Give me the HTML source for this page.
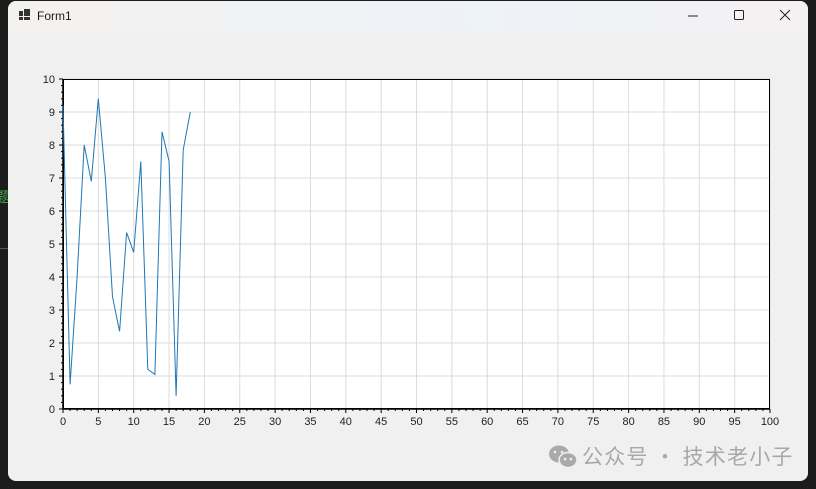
<!DOCTYPE html>
<html><head><meta charset="utf-8"><style>
html,body{margin:0;padding:0;width:816px;height:489px;overflow:hidden;background:#1c1c1c;font-family:"Liberation Sans","Noto Sans CJK SC",sans-serif}
.win{position:absolute;left:8px;top:1px;width:800px;height:480px;background:#f0f0f0;border-radius:8px;overflow:hidden}
.tb{position:absolute;left:0;top:0;width:800px;height:30px;background:linear-gradient(90deg,#f4f2ef,#eef2f9 60%,#f4f1f1)}
.side{position:absolute;left:0;width:8px;height:1px;background:#555;top:248px}
.g{position:absolute;left:-4px;top:187px;color:#4caf50;font-size:14px;font-family:"Noto Sans CJK SC",sans-serif}
</style></head><body>
<div class="side"></div><div class="g">题</div>
<div class="win">
<div class="tb">
<svg width="800" height="30" style="position:absolute;left:0;top:0">
<rect x="11" y="10" width="4" height="5" fill="#333"/><rect x="16" y="8" width="6" height="7" fill="#333"/><rect x="11" y="16" width="4" height="3" fill="#333"/><rect x="16" y="16" width="6" height="3" fill="#333"/>
<text x="29" y="19" font-size="12" fill="#1a1a1a" font-family="Liberation Sans">Form1</text>
<line x1="680" y1="15" x2="690" y2="15" stroke="#222" stroke-width="1"/>
<rect x="726.5" y="9.5" width="9" height="9" rx="1" fill="none" stroke="#222"/>
<path d="M772 9L782 19M782 9L772 19" stroke="#222" stroke-width="1"/>
</svg>
</div>
</div>
<svg id="c" width="816" height="489" style="position:absolute;left:0;top:0" font-family="Liberation Sans" font-size="11" fill="#222"></svg>
<div style="position:absolute;left:548px;top:441px;color:#a8a8a8;font-size:21px;letter-spacing:1.2px;font-family:'Noto Sans CJK SC',sans-serif;white-space:nowrap">
<svg width="30" height="24" style="vertical-align:-4px;margin-right:4px"><ellipse cx="11" cy="10" rx="10" ry="8.5" fill="#aaa"/><ellipse cx="20" cy="16" rx="9" ry="7.5" fill="#aaa" stroke="#f0f0f0" stroke-width="1.5"/><circle cx="17" cy="15" r="1.3" fill="#f0f0f0"/><circle cx="23" cy="15" r="1.3" fill="#f0f0f0"/><circle cx="7" cy="8" r="1.3" fill="#f0f0f0"/><circle cx="14" cy="8" r="1.3" fill="#f0f0f0"/></svg>公众号 · 技术老小子</div>
<script>
var s='',X0=63,Y0=409,W=707,H=330;
s+='<rect x="63" y="79" width="707" height="330" fill="#fff"/>';
for(var i=0;i<=20;i++){var x=X0+W*i/20;s+='<line x1="'+x+'" y1="79" x2="'+x+'" y2="409" stroke="#dcdcdc"/>';s+='<text x="'+x+'" y="425" text-anchor="middle">'+(i*5)+'</text>';}
for(var j=0;j<=10;j++){var y=Y0-H*j/10;s+='<line x1="63" y1="'+y+'" x2="770" y2="'+y+'" stroke="#dcdcdc"/>';s+='<text x="55" y="'+(y+4)+'" text-anchor="end">'+j+'</text>';}
for(var i=0;i<=100;i++){var x=X0+W*i/100;s+='<line x1="'+x+'" y1="409" x2="'+x+'" y2="'+(i%5?411:413)+'" stroke="#000"/>';}
for(var j=0;j<=50;j++){var y=Y0-H*j/50;s+='<line x1="63" y1="'+y+'" x2="'+(j%5?61:59)+'" y2="'+y+'" stroke="#000"/>';}
s+='<rect x="63.5" y="79.5" width="706" height="329" fill="none" stroke="#000"/>';
s+='<line x1="63" y1="409" x2="770" y2="409" stroke="#000" stroke-width="1.5"/><line x1="63" y1="79" x2="63" y2="409" stroke="#000" stroke-width="1.5"/>';
var v=[9.2,0.75,4,8,6.9,9.4,7,3.4,2.35,5.35,4.75,7.5,1.2,1.05,8.4,7.5,0.4,7.85,9.0],p=[];
for(var k=0;k<v.length;k++)p.push((X0+7.07*k).toFixed(1)+','+(Y0-33*v[k]).toFixed(1));
s+='<polyline points="'+p.join(' ')+'" fill="none" stroke="#1f77b4" stroke-width="1"/>';
document.getElementById('c').innerHTML=s;
</script>
</body></html>
